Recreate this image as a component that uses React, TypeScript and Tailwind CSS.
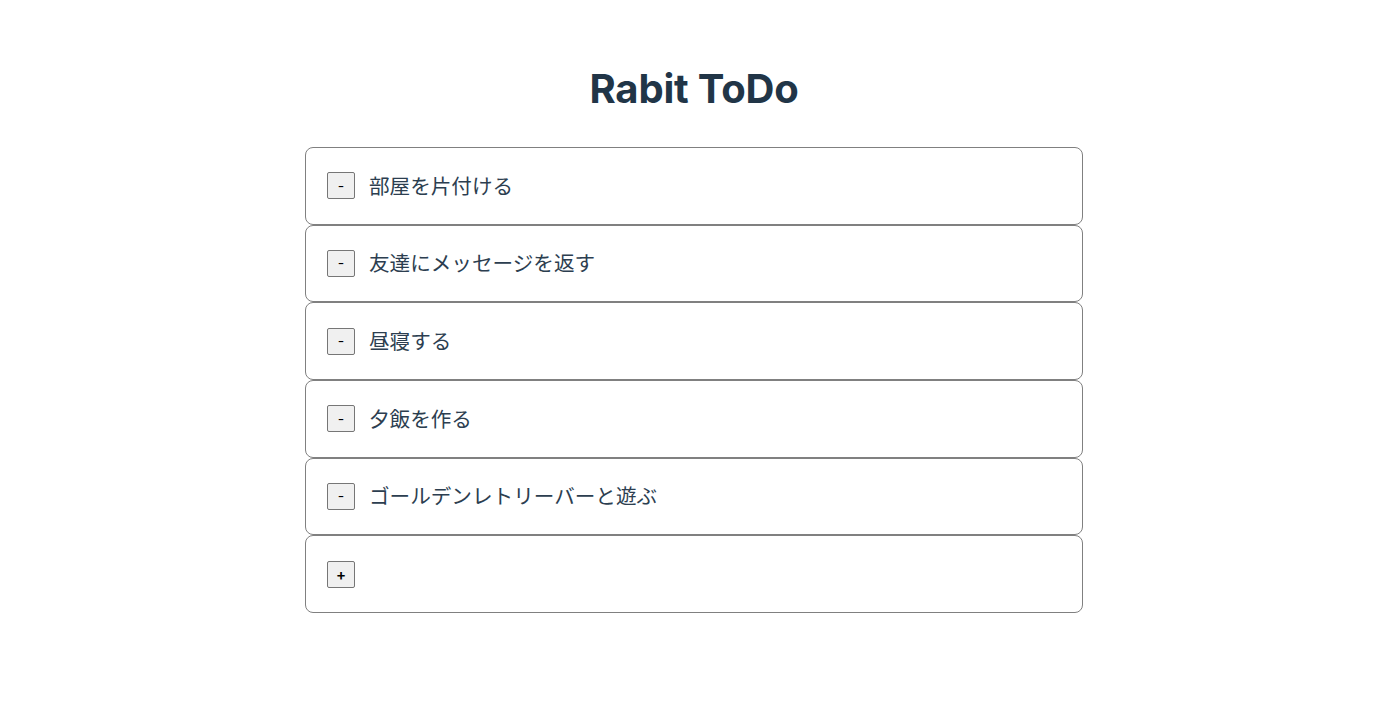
import { useState } from 'react'

const initialTodos = [
  '部屋を片付ける',
  '友達にメッセージを返す',
  '昼寝する',
  '夕飯を作る',
  'ゴールデンレトリーバーと遊ぶ',
]

const font = "font-['Inter','Noto_Sans_CJK_JP',sans-serif]"

export default function App() {
  const [todos, setTodos] = useState(initialTodos)

  return (
    <div className={`min-h-[717px] w-[1388px] bg-white ${font} text-[#2c3e50]`}>
      <h1 className="pt-[63px] text-center text-[40px] font-bold leading-[52px] tracking-[-0.2px] text-[#213547]">
        Rabit ToDo
      </h1>
      <ul className="mx-auto mt-[32px] w-[778px]">
        {todos.map((todo, i) => (
          <li
            key={i}
            className="flex h-[77.67px] items-center gap-[14px] rounded-[8px] border border-[#808080] px-[21px]"
          >
            <button
              className="flex h-[27px] w-[28px] items-center justify-center rounded-[2px] border border-[#767676] bg-[#f0f0f0] text-[14px] leading-none text-black"
              onClick={() => setTodos(todos.filter((_, j) => j !== i))}
            >
              -
            </button>
            <span className="pt-[2px] text-[20.6px] leading-[30px]">{todo}</span>
          </li>
        ))}
        <li className="flex h-[77.67px] items-center rounded-[8px] border border-[#808080] px-[21px]">
          <button className="flex h-[27px] w-[28px] items-center justify-center rounded-[2px] border border-[#767676] bg-[#f0f0f0] text-[15px] font-semibold leading-none text-black">
            +
          </button>
        </li>
      </ul>
    </div>
  )
}
